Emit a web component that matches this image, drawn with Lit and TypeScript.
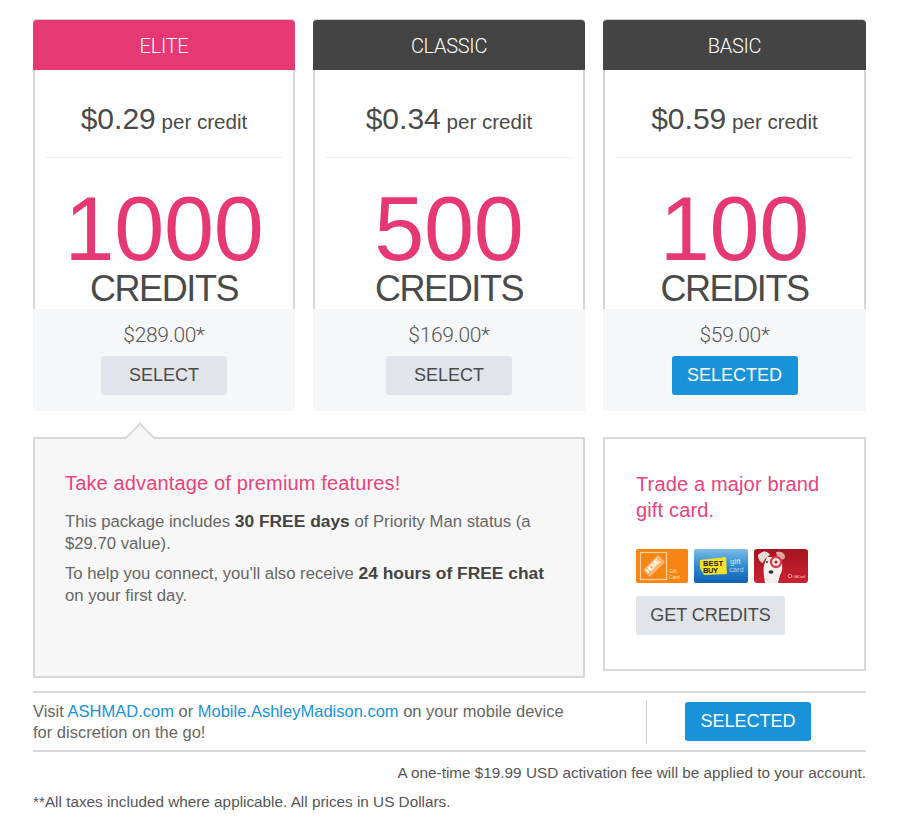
import { LitElement, css, html } from "lit";
import { customElement } from "lit/decorators.js";

interface IPlan {
  name: string;
  perCredit: string;
  credits: string;
  total: string;
  dark: boolean;
  selected: boolean;
}

const PLANS: Array<IPlan> = [
  { name: "ELITE", perCredit: "$0.29", credits: "1000", total: "$289.00*", dark: false, selected: false },
  { name: "CLASSIC", perCredit: "$0.34", credits: "500", total: "$169.00*", dark: true, selected: false },
  { name: "BASIC", perCredit: "$0.59", credits: "100", total: "$59.00*", dark: true, selected: true },
];

@customElement("app-root")
export class AppRoot extends LitElement {
  renderPlan(plan: IPlan) {
    return html`
      <section class="plan">
        <header class="plan-head ${plan.dark ? "dark" : ""}">${plan.name}</header>
        <div class="plan-body">
          <div class="rate"><b>${plan.perCredit}</b> per credit</div>
          <div class="amount">${plan.credits}</div>
          <div class="credits">CREDITS</div>
        </div>
        <div class="plan-foot">
          <div class="total">${plan.total}</div>
          <button class="btn ${plan.selected ? "primary" : ""}">${plan.selected ? "SELECTED" : "SELECT"}</button>
        </div>
      </section>
    `;
  }

  renderCards() {
    return html`
      <div class="cards">
        <svg width="52" height="34" viewBox="0 0 52 34" font-family="Liberation Sans, sans-serif">
          <rect width="52" height="34" rx="2" fill="#f68512" />
          <rect x="4.5" y="3.5" width="26" height="27" fill="none" stroke="#fbcf9f" stroke-width="1.2" />
          <path d="M7 21 L22 6 L29 13 L14 28 Z" fill="#fbb76f" />
          <text transform="translate(12.5 24.5) rotate(-45)" font-size="7" font-weight="700" fill="#fff" textLength="17">HOME</text>
          <text x="33" y="24" font-size="5" fill="#fde3c8">Gift</text>
          <text x="33" y="30" font-size="5" fill="#fde3c8">Card</text>
        </svg>
        <svg width="54" height="34" viewBox="0 0 54 34" font-family="Liberation Sans, sans-serif">
          <defs>
            <linearGradient id="bb" x1="0" y1="0" x2="0" y2="1">
              <stop offset="0" stop-color="#7dbce6" />
              <stop offset="0.55" stop-color="#2a86cf" />
              <stop offset="1" stop-color="#0f62b0" />
            </linearGradient>
          </defs>
          <rect width="54" height="34" rx="2" fill="url(#bb)" />
          <path d="M6 11 L32 8 L33 25 L10 26 L6 19 Z" fill="#f5e02a" />
          <text x="9" y="16.5" font-size="7.5" font-weight="700" fill="#1c1c1c" textLength="20">BEST</text>
          <text x="9" y="23.5" font-size="7.5" font-weight="700" fill="#1c1c1c" textLength="15">BUY</text>
          <text x="36" y="15" font-size="8" fill="#cfe6f6">gift</text>
          <text x="35" y="23" font-size="7.5" fill="#a8d2ee">card</text>
        </svg>
        <svg width="54" height="34" viewBox="0 0 54 34" font-family="Liberation Sans, sans-serif">
          <defs>
            <linearGradient id="tg" x1="0" y1="0" x2="0" y2="1">
              <stop offset="0" stop-color="#a5141f" />
              <stop offset="1" stop-color="#cb2232" />
            </linearGradient>
          </defs>
          <rect width="54" height="34" rx="3" fill="url(#tg)" />
          <path d="M11 34 C10 28 9 22 10 16 L13 8 L26 8 C29 14 29 22 26 26 L24 34 Z" fill="#f3f0ee" />
          <path d="M4 6 C8 1 14 2 16 6 C13 8 10 10 9 14 C6 13 4 10 4 6 Z" fill="#e6dcd6" />
          <path d="M22 3 C27 2 31 4 31 8 C31 10 29 11 27 10 L23 7 Z" fill="#d8a9a4" />
          <circle cx="22" cy="13" r="5" fill="#f3f0ee" stroke="#d8404c" stroke-width="2.4" />
          <circle cx="22" cy="13" r="1.6" fill="#a81a24" />
          <circle cx="13" cy="13" r="1" fill="#333" />
          <ellipse cx="17" cy="23" rx="2.4" ry="1.7" fill="#2c2c2c" />
          <circle cx="36" cy="27" r="1.8" fill="none" stroke="#eec2c6" stroke-width="0.7" />
          <text x="39" y="29" font-size="4" fill="#eec2c6" textLength="12">GiftCard</text>
        </svg>
      </div>
    `;
  }

  render() {
    return html`
      <main class="page">
        <div class="plans">${PLANS.map((p) => this.renderPlan(p))}</div>

        <div class="panels">
          <div class="panel premium">
            <h2>Take advantage of premium features!</h2>
            <p>This package includes <b>30 FREE days</b> of Priority Man status (a $29.70 value).</p>
            <p>To help you connect, you'll also receive <b>24 hours of FREE chat</b> on your first day.</p>
          </div>
          <div class="panel trade">
            <h2>Trade a major brand gift card.</h2>
            ${this.renderCards()}
            <button class="btn">GET CREDITS</button>
          </div>
        </div>

        <div class="mobile">
          <div class="mobile-text">
            Visit <a>ASHMAD.com</a> or <a>Mobile.AshleyMadison.com</a> on your mobile device<br />
            for discretion on the go!
          </div>
          <div class="mobile-action"><button class="btn primary">SELECTED</button></div>
        </div>

        <div class="fee">A one-time $19.99 USD activation fee will be applied to your account.</div>
        <div class="taxes">**All taxes included where applicable. All prices in US Dollars.</div>
      </main>
    `;
  }

  static styles = css`
    :host {
      display: block;
      font-family: "Liberation Sans", Arial, sans-serif;
      color: #4a4a4a;
      background: #fff;
      height: 823px;
    }
    .page {
      padding: 20px 38px 0 33px;
    }
    .plans {
      display: grid;
      grid-template-columns: 262px 272px 263px;
      column-gap: 18px;
    }
    .plan {
      display: flex;
      flex-direction: column;
      height: 391px;
      border-radius: 4px 4px 0 0;
    }
    .plan-head {
      height: 50px;
      background: #e63873;
      color: #fff;
      font-family: Roboto, "Liberation Sans", sans-serif;
      font-weight: 300;
      font-size: 20px;
      letter-spacing: -0.3px;
      line-height: 52px;
      text-align: center;
      border-radius: 4px 4px 0 0;
      box-shadow: 0 -1px 0 #d2d2d2;
    }
    .plan-head.dark {
      background: #444;
    }
    .plan-body {
      flex: 1;
      border-left: 2px solid #d6d6d6;
      border-right: 2px solid #d6d6d6;
      padding: 0 11px;
      text-align: center;
    }
    .rate {
      height: 88px;
      box-sizing: border-box;
      padding-top: 31px;
      border-bottom: 1px solid #ededed;
      font-size: 20.6px;
      line-height: 36px;
    }
    .rate b {
      font-weight: 400;
      font-size: 30px;
    }
    .amount {
      margin-top: 25px;
      font-size: 90px;
      line-height: 92px;
      color: #e63873;
      letter-spacing: -0.3px;
    }
    .credits {
      font-size: 36px;
      line-height: 28px;
      letter-spacing: -1.4px;
    }
    .plan-foot {
      height: 102px;
      background: #f6f7f9;
      text-align: center;
    }
    .total {
      padding-top: 14px;
      height: 33px;
      font-family: Roboto, "Liberation Sans", sans-serif;
      font-weight: 300;
      font-size: 21px;
      line-height: 24px;
      letter-spacing: -0.3px;
      color: #555;
    }
    .btn {
      display: inline-block;
      width: 126px;
      height: 39px;
      padding: 0;
      border: 0;
      border-radius: 3px;
      background: #e1e5e9;
      color: #4a4a4a;
      font: inherit;
      font-size: 18px;
      line-height: 39px;
      text-align: center;
    }
    .btn.primary {
      background: #1892d8;
      color: #fff;
    }
    .panels {
      display: grid;
      grid-template-columns: 552px 263px;
      column-gap: 18px;
      align-items: start;
      margin-top: 26px;
    }
    .panel {
      box-sizing: border-box;
      border: 2px solid #d8d8d8;
    }
    .panel h2 {
      margin: 0;
      font-size: 20px;
      font-weight: 400;
      line-height: 26px;
      letter-spacing: 0.15px;
      color: #e8437b;
    }
    .premium {
      position: relative;
      height: 241px;
      background: #f7f7f7;
      padding: 31px 30px 0 30px;
    }
    .premium::before {
      content: "";
      position: absolute;
      left: 94px;
      top: -12px;
      width: 22px;
      height: 22px;
      box-sizing: border-box;
      background: #f7f7f7;
      border-top: 2px solid #d8d8d8;
      border-left: 2px solid #d8d8d8;
      transform: rotate(45deg);
    }
    .premium h2 {
      position: relative;
    }
    .premium p {
      margin: 8px 0 0;
      font-size: 16.7px;
      line-height: 22px;
      color: #666;
    }
    .premium p b {
      font-size: 17.4px;
      line-height: 20px;
      color: #444;
    }
    .premium h2 + p {
      margin-top: 15px;
    }
    .trade {
      height: 234px;
      padding: 32px 30px 0 31px;
    }
    .cards {
      display: flex;
      gap: 6px;
      margin-top: 26px;
    }
    .cards svg {
      display: block;
    }
    .trade .btn {
      display: block;
      width: 149px;
      margin-top: 13px;
    }
    .mobile {
      display: flex;
      align-items: center;
      height: 57px;
      margin-top: 13px;
      border-top: 2px solid #d8d8d8;
      border-bottom: 2px solid #d8d8d8;
    }
    .mobile-text {
      width: 613px;
      font-size: 16.5px;
      line-height: 21px;
      color: #666;
    }
    .mobile-text a {
      color: #1892d8;
    }
    .mobile-action {
      height: 44px;
      border-left: 1px solid #cfcfcf;
      padding-left: 38px;
      display: flex;
      align-items: center;
    }
    .fee {
      margin-top: 12px;
      font-size: 15.3px;
      line-height: 18px;
      text-align: right;
      color: #555;
    }
    .taxes {
      margin-top: 11px;
      font-size: 15.3px;
      line-height: 18px;
      color: #555;
    }
  `;
}

declare global {
  interface HTMLElementTagNameMap {
    "app-root": AppRoot;
  }
}
